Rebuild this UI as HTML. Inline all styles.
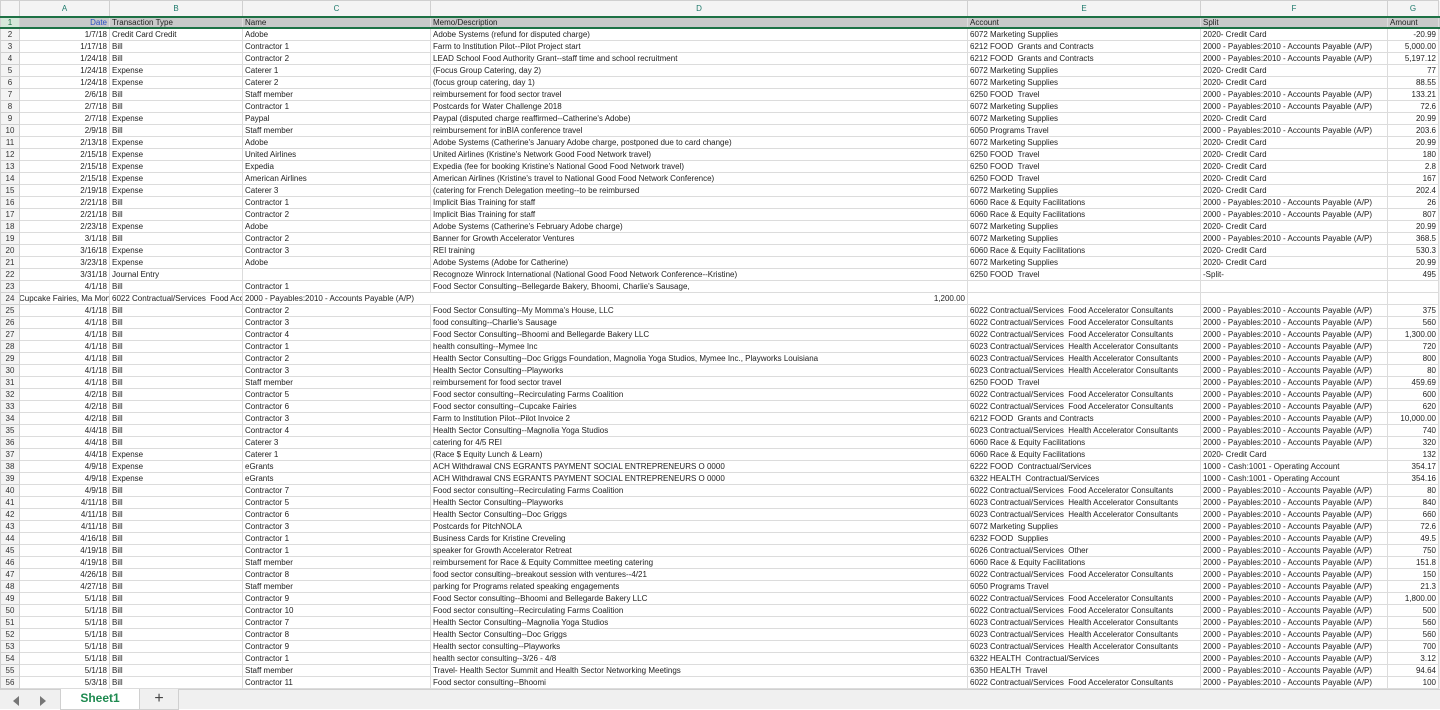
<!DOCTYPE html>
<html><head><meta charset="utf-8">
<style>
html,body{margin:0;padding:0;background:#fff;width:1440px;height:708px;overflow:hidden;font-family:"Liberation Sans",Arial,sans-serif;}
table{border-collapse:collapse;table-layout:fixed;position:absolute;left:0;top:0;width:1440px;}
td{height:11px;padding:0 2px;font-size:8px;line-height:11px;color:#222;border:1px solid #dcdcdc;white-space:nowrap;overflow:hidden;}
td.n{background:#f4f4f4;color:#333;text-align:center;padding:0;border-color:#d0d0d0}
td.r{text-align:right}
tr.h td{height:15px;background:#f4f4f4;color:#1e7a6c;text-align:center;font-size:8px;border-color:#d0d0d0}
tr.one td{background:#c9c9c9;border-top:2px solid #1e7145;border-bottom:2px solid #1e7145;height:9px;line-height:9px}
tr.one td.n{background:#d5e8da;color:#1e7145}
td.g{background:#f0f0f0;border:none;padding:0}
.tabs{position:absolute;left:0;top:689px;width:1440px;height:19px;background:#f0f0f0;border-top:1px solid #d0d0d0}
.tab{position:absolute;top:-1px;height:20px;background:#fff;border:1px solid #d0d0d0;border-top:none}
</style></head><body>
<table>
<colgroup><col style="width:19px"><col style="width:90px"><col style="width:133px"><col style="width:188px"><col style="width:537px"><col style="width:233px"><col style="width:187px"><col style="width:51px"><col style="width:2px"></colgroup>
<tr class="h"><td></td><td>A</td><td>B</td><td>C</td><td>D</td><td>E</td><td>F</td><td>G</td><td class="g"></td></tr>
<tr class="one"><td class="n">1</td><td class="r" style="color:#2b4fc4">Date</td><td>Transaction Type</td><td>Name</td><td>Memo/Description</td><td>Account</td><td>Split</td><td>Amount</td><td class="g"></td></tr>
<tr><td class="n">2</td><td class="r">1/7/18</td><td>Credit Card Credit</td><td>Adobe</td><td>Adobe Systems (refund for disputed charge)</td><td>6072 Marketing Supplies</td><td>2020- Credit Card</td><td class="r">-20.99</td><td class="g"></td></tr>
<tr><td class="n">3</td><td class="r">1/17/18</td><td>Bill</td><td>Contractor 1</td><td>Farm to Institution Pilot--Pilot Project start</td><td>6212 FOOD &nbsp;Grants and Contracts</td><td>2000 - Payables:2010 - Accounts Payable (A/P)</td><td class="r">5,000.00</td><td class="g"></td></tr>
<tr><td class="n">4</td><td class="r">1/24/18</td><td>Bill</td><td>Contractor 2</td><td>LEAD School Food Authority Grant--staff time and school recruitment</td><td>6212 FOOD &nbsp;Grants and Contracts</td><td>2000 - Payables:2010 - Accounts Payable (A/P)</td><td class="r">5,197.12</td><td class="g"></td></tr>
<tr><td class="n">5</td><td class="r">1/24/18</td><td>Expense</td><td>Caterer 1</td><td>(Focus Group Catering, day 2)</td><td>6072 Marketing Supplies</td><td>2020- Credit Card</td><td class="r">77</td><td class="g"></td></tr>
<tr><td class="n">6</td><td class="r">1/24/18</td><td>Expense</td><td>Caterer 2</td><td>(focus group catering, day 1)</td><td>6072 Marketing Supplies</td><td>2020- Credit Card</td><td class="r">88.55</td><td class="g"></td></tr>
<tr><td class="n">7</td><td class="r">2/6/18</td><td>Bill</td><td>Staff member</td><td>reimbursement for food sector travel</td><td>6250 FOOD &nbsp;Travel</td><td>2000 - Payables:2010 - Accounts Payable (A/P)</td><td class="r">133.21</td><td class="g"></td></tr>
<tr><td class="n">8</td><td class="r">2/7/18</td><td>Bill</td><td>Contractor 1</td><td>Postcards for Water Challenge 2018</td><td>6072 Marketing Supplies</td><td>2000 - Payables:2010 - Accounts Payable (A/P)</td><td class="r">72.6</td><td class="g"></td></tr>
<tr><td class="n">9</td><td class="r">2/7/18</td><td>Expense</td><td>Paypal</td><td>Paypal (disputed charge reaffirmed--Catherine's Adobe)</td><td>6072 Marketing Supplies</td><td>2020- Credit Card</td><td class="r">20.99</td><td class="g"></td></tr>
<tr><td class="n">10</td><td class="r">2/9/18</td><td>Bill</td><td>Staff member</td><td>reimbursement for inBIA conference travel</td><td>6050 Programs Travel</td><td>2000 - Payables:2010 - Accounts Payable (A/P)</td><td class="r">203.6</td><td class="g"></td></tr>
<tr><td class="n">11</td><td class="r">2/13/18</td><td>Expense</td><td>Adobe</td><td>Adobe Systems (Catherine's January Adobe charge, postponed due to card change)</td><td>6072 Marketing Supplies</td><td>2020- Credit Card</td><td class="r">20.99</td><td class="g"></td></tr>
<tr><td class="n">12</td><td class="r">2/15/18</td><td>Expense</td><td>United Airlines</td><td>United Airlines (Kristine's Network Good Food Network travel)</td><td>6250 FOOD &nbsp;Travel</td><td>2020- Credit Card</td><td class="r">180</td><td class="g"></td></tr>
<tr><td class="n">13</td><td class="r">2/15/18</td><td>Expense</td><td>Expedia</td><td>Expedia (fee for booking Kristine's National Good Food Network travel)</td><td>6250 FOOD &nbsp;Travel</td><td>2020- Credit Card</td><td class="r">2.8</td><td class="g"></td></tr>
<tr><td class="n">14</td><td class="r">2/15/18</td><td>Expense</td><td>American Airlines</td><td>American Airlines (Kristine's travel to National Good Food Network Conference)</td><td>6250 FOOD &nbsp;Travel</td><td>2020- Credit Card</td><td class="r">167</td><td class="g"></td></tr>
<tr><td class="n">15</td><td class="r">2/19/18</td><td>Expense</td><td>Caterer 3</td><td>(catering for French Delegation meeting--to be reimbursed</td><td>6072 Marketing Supplies</td><td>2020- Credit Card</td><td class="r">202.4</td><td class="g"></td></tr>
<tr><td class="n">16</td><td class="r">2/21/18</td><td>Bill</td><td>Contractor 1</td><td>Implicit Bias Training for staff</td><td>6060 Race &amp; Equity Facilitations</td><td>2000 - Payables:2010 - Accounts Payable (A/P)</td><td class="r">26</td><td class="g"></td></tr>
<tr><td class="n">17</td><td class="r">2/21/18</td><td>Bill</td><td>Contractor 2</td><td>Implicit Bias Training for staff</td><td>6060 Race &amp; Equity Facilitations</td><td>2000 - Payables:2010 - Accounts Payable (A/P)</td><td class="r">807</td><td class="g"></td></tr>
<tr><td class="n">18</td><td class="r">2/23/18</td><td>Expense</td><td>Adobe</td><td>Adobe Systems (Catherine's February Adobe charge)</td><td>6072 Marketing Supplies</td><td>2020- Credit Card</td><td class="r">20.99</td><td class="g"></td></tr>
<tr><td class="n">19</td><td class="r">3/1/18</td><td>Bill</td><td>Contractor 2</td><td>Banner for Growth Accelerator Ventures</td><td>6072 Marketing Supplies</td><td>2000 - Payables:2010 - Accounts Payable (A/P)</td><td class="r">368.5</td><td class="g"></td></tr>
<tr><td class="n">20</td><td class="r">3/16/18</td><td>Expense</td><td>Contractor 3</td><td>REI training</td><td>6060 Race &amp; Equity Facilitations</td><td>2020- Credit Card</td><td class="r">530.3</td><td class="g"></td></tr>
<tr><td class="n">21</td><td class="r">3/23/18</td><td>Expense</td><td>Adobe</td><td>Adobe Systems (Adobe for Catherine)</td><td>6072 Marketing Supplies</td><td>2020- Credit Card</td><td class="r">20.99</td><td class="g"></td></tr>
<tr><td class="n">22</td><td class="r">3/31/18</td><td>Journal Entry</td><td></td><td>Recognoze Winrock International (National Good Food Network Conference--Kristine)</td><td>6250 FOOD &nbsp;Travel</td><td>-Split-</td><td class="r">495</td><td class="g"></td></tr>
<tr><td class="n">23</td><td class="r">4/1/18</td><td>Bill</td><td>Contractor 1</td><td>Food Sector Consulting--Bellegarde Bakery, Bhoomi, Charlie's Sausage,</td><td></td><td></td><td></td><td class="g"></td></tr>
<tr><td class="n">24</td><td style="text-indent:-3px">Cupcake Fairies, Ma Mon</td><td>6022 Contractual/Services &nbsp;Food Accelerator</td><td style="overflow:visible;border-right-color:transparent">2000 - Payables:2010 - Accounts Payable (A/P)</td><td class="r">1,200.00</td><td></td><td></td><td></td><td class="g"></td></tr>
<tr><td class="n">25</td><td class="r">4/1/18</td><td>Bill</td><td>Contractor 2</td><td>Food Sector Consulting--My Momma's House, LLC</td><td>6022 Contractual/Services &nbsp;Food Accelerator Consultants</td><td>2000 - Payables:2010 - Accounts Payable (A/P)</td><td class="r">375</td><td class="g"></td></tr>
<tr><td class="n">26</td><td class="r">4/1/18</td><td>Bill</td><td>Contractor 3</td><td>food consulting--Charlie's Sausage</td><td>6022 Contractual/Services &nbsp;Food Accelerator Consultants</td><td>2000 - Payables:2010 - Accounts Payable (A/P)</td><td class="r">560</td><td class="g"></td></tr>
<tr><td class="n">27</td><td class="r">4/1/18</td><td>Bill</td><td>Contractor 4</td><td>Food Sector Consulting--Bhoomi and Bellegarde Bakery LLC</td><td>6022 Contractual/Services &nbsp;Food Accelerator Consultants</td><td>2000 - Payables:2010 - Accounts Payable (A/P)</td><td class="r">1,300.00</td><td class="g"></td></tr>
<tr><td class="n">28</td><td class="r">4/1/18</td><td>Bill</td><td>Contractor 1</td><td>health consulting--Mymee Inc</td><td>6023 Contractual/Services &nbsp;Health Accelerator Consultants</td><td>2000 - Payables:2010 - Accounts Payable (A/P)</td><td class="r">720</td><td class="g"></td></tr>
<tr><td class="n">29</td><td class="r">4/1/18</td><td>Bill</td><td>Contractor 2</td><td>Health Sector Consulting--Doc Griggs Foundation, Magnolia Yoga Studios, Mymee Inc., Playworks Louisiana</td><td>6023 Contractual/Services &nbsp;Health Accelerator Consultants</td><td>2000 - Payables:2010 - Accounts Payable (A/P)</td><td class="r">800</td><td class="g"></td></tr>
<tr><td class="n">30</td><td class="r">4/1/18</td><td>Bill</td><td>Contractor 3</td><td>Health Sector Consulting--Playworks</td><td>6023 Contractual/Services &nbsp;Health Accelerator Consultants</td><td>2000 - Payables:2010 - Accounts Payable (A/P)</td><td class="r">80</td><td class="g"></td></tr>
<tr><td class="n">31</td><td class="r">4/1/18</td><td>Bill</td><td>Staff member</td><td>reimbursement for food sector travel</td><td>6250 FOOD &nbsp;Travel</td><td>2000 - Payables:2010 - Accounts Payable (A/P)</td><td class="r">459.69</td><td class="g"></td></tr>
<tr><td class="n">32</td><td class="r">4/2/18</td><td>Bill</td><td>Contractor 5</td><td>Food sector consulting--Recirculating Farms Coalition</td><td>6022 Contractual/Services &nbsp;Food Accelerator Consultants</td><td>2000 - Payables:2010 - Accounts Payable (A/P)</td><td class="r">600</td><td class="g"></td></tr>
<tr><td class="n">33</td><td class="r">4/2/18</td><td>Bill</td><td>Contractor 6</td><td>Food sector consulting--Cupcake Fairies</td><td>6022 Contractual/Services &nbsp;Food Accelerator Consultants</td><td>2000 - Payables:2010 - Accounts Payable (A/P)</td><td class="r">620</td><td class="g"></td></tr>
<tr><td class="n">34</td><td class="r">4/2/18</td><td>Bill</td><td>Contractor 3</td><td>Farm to Institution Pilot--Pilot Invoice 2</td><td>6212 FOOD &nbsp;Grants and Contracts</td><td>2000 - Payables:2010 - Accounts Payable (A/P)</td><td class="r">10,000.00</td><td class="g"></td></tr>
<tr><td class="n">35</td><td class="r">4/4/18</td><td>Bill</td><td>Contractor 4</td><td>Health Sector Consulting--Magnolia Yoga Studios</td><td>6023 Contractual/Services &nbsp;Health Accelerator Consultants</td><td>2000 - Payables:2010 - Accounts Payable (A/P)</td><td class="r">740</td><td class="g"></td></tr>
<tr><td class="n">36</td><td class="r">4/4/18</td><td>Bill</td><td>Caterer 3</td><td>catering for 4/5 REI</td><td>6060 Race &amp; Equity Facilitations</td><td>2000 - Payables:2010 - Accounts Payable (A/P)</td><td class="r">320</td><td class="g"></td></tr>
<tr><td class="n">37</td><td class="r">4/4/18</td><td>Expense</td><td>Caterer 1</td><td>(Race $ Equity Lunch &amp; Learn)</td><td>6060 Race &amp; Equity Facilitations</td><td>2020- Credit Card</td><td class="r">132</td><td class="g"></td></tr>
<tr><td class="n">38</td><td class="r">4/9/18</td><td>Expense</td><td>eGrants</td><td>ACH Withdrawal CNS EGRANTS PAYMENT SOCIAL ENTREPRENEURS O 0000</td><td>6222 FOOD &nbsp;Contractual/Services</td><td>1000 - Cash:1001 - Operating Account</td><td class="r">354.17</td><td class="g"></td></tr>
<tr><td class="n">39</td><td class="r">4/9/18</td><td>Expense</td><td>eGrants</td><td>ACH Withdrawal CNS EGRANTS PAYMENT SOCIAL ENTREPRENEURS O 0000</td><td>6322 HEALTH &nbsp;Contractual/Services</td><td>1000 - Cash:1001 - Operating Account</td><td class="r">354.16</td><td class="g"></td></tr>
<tr><td class="n">40</td><td class="r">4/9/18</td><td>Bill</td><td>Contractor 7</td><td>Food sector consulting--Recirculating Farms Coalition</td><td>6022 Contractual/Services &nbsp;Food Accelerator Consultants</td><td>2000 - Payables:2010 - Accounts Payable (A/P)</td><td class="r">80</td><td class="g"></td></tr>
<tr><td class="n">41</td><td class="r">4/11/18</td><td>Bill</td><td>Contractor 5</td><td>Health Sector Consulting--Playworks</td><td>6023 Contractual/Services &nbsp;Health Accelerator Consultants</td><td>2000 - Payables:2010 - Accounts Payable (A/P)</td><td class="r">840</td><td class="g"></td></tr>
<tr><td class="n">42</td><td class="r">4/11/18</td><td>Bill</td><td>Contractor 6</td><td>Health Sector Consulting--Doc Griggs</td><td>6023 Contractual/Services &nbsp;Health Accelerator Consultants</td><td>2000 - Payables:2010 - Accounts Payable (A/P)</td><td class="r">660</td><td class="g"></td></tr>
<tr><td class="n">43</td><td class="r">4/11/18</td><td>Bill</td><td>Contractor 3</td><td>Postcards for PitchNOLA</td><td>6072 Marketing Supplies</td><td>2000 - Payables:2010 - Accounts Payable (A/P)</td><td class="r">72.6</td><td class="g"></td></tr>
<tr><td class="n">44</td><td class="r">4/16/18</td><td>Bill</td><td>Contractor 1</td><td>Business Cards for Kristine Creveling</td><td>6232 FOOD &nbsp;Supplies</td><td>2000 - Payables:2010 - Accounts Payable (A/P)</td><td class="r">49.5</td><td class="g"></td></tr>
<tr><td class="n">45</td><td class="r">4/19/18</td><td>Bill</td><td>Contractor 1</td><td>speaker for Growth Accelerator Retreat</td><td>6026 Contractual/Services &nbsp;Other</td><td>2000 - Payables:2010 - Accounts Payable (A/P)</td><td class="r">750</td><td class="g"></td></tr>
<tr><td class="n">46</td><td class="r">4/19/18</td><td>Bill</td><td>Staff member</td><td>reimbursement for Race &amp; Equity Committee meeting catering</td><td>6060 Race &amp; Equity Facilitations</td><td>2000 - Payables:2010 - Accounts Payable (A/P)</td><td class="r">151.8</td><td class="g"></td></tr>
<tr><td class="n">47</td><td class="r">4/26/18</td><td>Bill</td><td>Contractor 8</td><td>food sector consulting--breakout session with ventures--4/21</td><td>6022 Contractual/Services &nbsp;Food Accelerator Consultants</td><td>2000 - Payables:2010 - Accounts Payable (A/P)</td><td class="r">150</td><td class="g"></td></tr>
<tr><td class="n">48</td><td class="r">4/27/18</td><td>Bill</td><td>Staff member</td><td>parking for Programs related speaking engagements</td><td>6050 Programs Travel</td><td>2000 - Payables:2010 - Accounts Payable (A/P)</td><td class="r">21.3</td><td class="g"></td></tr>
<tr><td class="n">49</td><td class="r">5/1/18</td><td>Bill</td><td>Contractor 9</td><td>Food Sector consulting--Bhoomi and Bellegarde Bakery LLC</td><td>6022 Contractual/Services &nbsp;Food Accelerator Consultants</td><td>2000 - Payables:2010 - Accounts Payable (A/P)</td><td class="r">1,800.00</td><td class="g"></td></tr>
<tr><td class="n">50</td><td class="r">5/1/18</td><td>Bill</td><td>Contractor 10</td><td>Food sector consulting--Recirculating Farms Coalition</td><td>6022 Contractual/Services &nbsp;Food Accelerator Consultants</td><td>2000 - Payables:2010 - Accounts Payable (A/P)</td><td class="r">500</td><td class="g"></td></tr>
<tr><td class="n">51</td><td class="r">5/1/18</td><td>Bill</td><td>Contractor 7</td><td>Health Sector Consulting--Magnolia Yoga Studios</td><td>6023 Contractual/Services &nbsp;Health Accelerator Consultants</td><td>2000 - Payables:2010 - Accounts Payable (A/P)</td><td class="r">560</td><td class="g"></td></tr>
<tr><td class="n">52</td><td class="r">5/1/18</td><td>Bill</td><td>Contractor 8</td><td>Health Sector Consulting--Doc Griggs</td><td>6023 Contractual/Services &nbsp;Health Accelerator Consultants</td><td>2000 - Payables:2010 - Accounts Payable (A/P)</td><td class="r">560</td><td class="g"></td></tr>
<tr><td class="n">53</td><td class="r">5/1/18</td><td>Bill</td><td>Contractor 9</td><td>Health sector consulting--Playworks</td><td>6023 Contractual/Services &nbsp;Health Accelerator Consultants</td><td>2000 - Payables:2010 - Accounts Payable (A/P)</td><td class="r">700</td><td class="g"></td></tr>
<tr><td class="n">54</td><td class="r">5/1/18</td><td>Bill</td><td>Contractor 1</td><td>health sector consulting--3/26 - 4/8</td><td>6322 HEALTH &nbsp;Contractual/Services</td><td>2000 - Payables:2010 - Accounts Payable (A/P)</td><td class="r">3.12</td><td class="g"></td></tr>
<tr><td class="n">55</td><td class="r">5/1/18</td><td>Bill</td><td>Staff member</td><td>Travel- Health Sector Summit and Health Sector Networking Meetings</td><td>6350 HEALTH &nbsp;Travel</td><td>2000 - Payables:2010 - Accounts Payable (A/P)</td><td class="r">94.64</td><td class="g"></td></tr>
<tr><td class="n">56</td><td class="r">5/3/18</td><td>Bill</td><td>Contractor 11</td><td>Food sector consulting--Bhoomi</td><td>6022 Contractual/Services &nbsp;Food Accelerator Consultants</td><td>2000 - Payables:2010 - Accounts Payable (A/P)</td><td class="r">100</td><td class="g"></td></tr>
</table>
<div class="tabs">
<svg style="position:absolute;left:10px;top:5px" width="40" height="12" viewBox="0 0 40 12"><path d="M9 1 L3 6 L9 11 Z" fill="#777"/><path d="M30 1 L36 6 L30 11 Z" fill="#777"/></svg>
<div class="tab" style="left:60px;width:78px;text-align:center;font:bold 12px/19px 'Liberation Sans',sans-serif;color:#1e8a50">Sheet1</div>
<div class="tab" style="left:139px;width:38px;background:#f0f0f0;text-align:center;font:16px/19px 'Liberation Sans',sans-serif;color:#444">+</div>
</div>
</body></html>
